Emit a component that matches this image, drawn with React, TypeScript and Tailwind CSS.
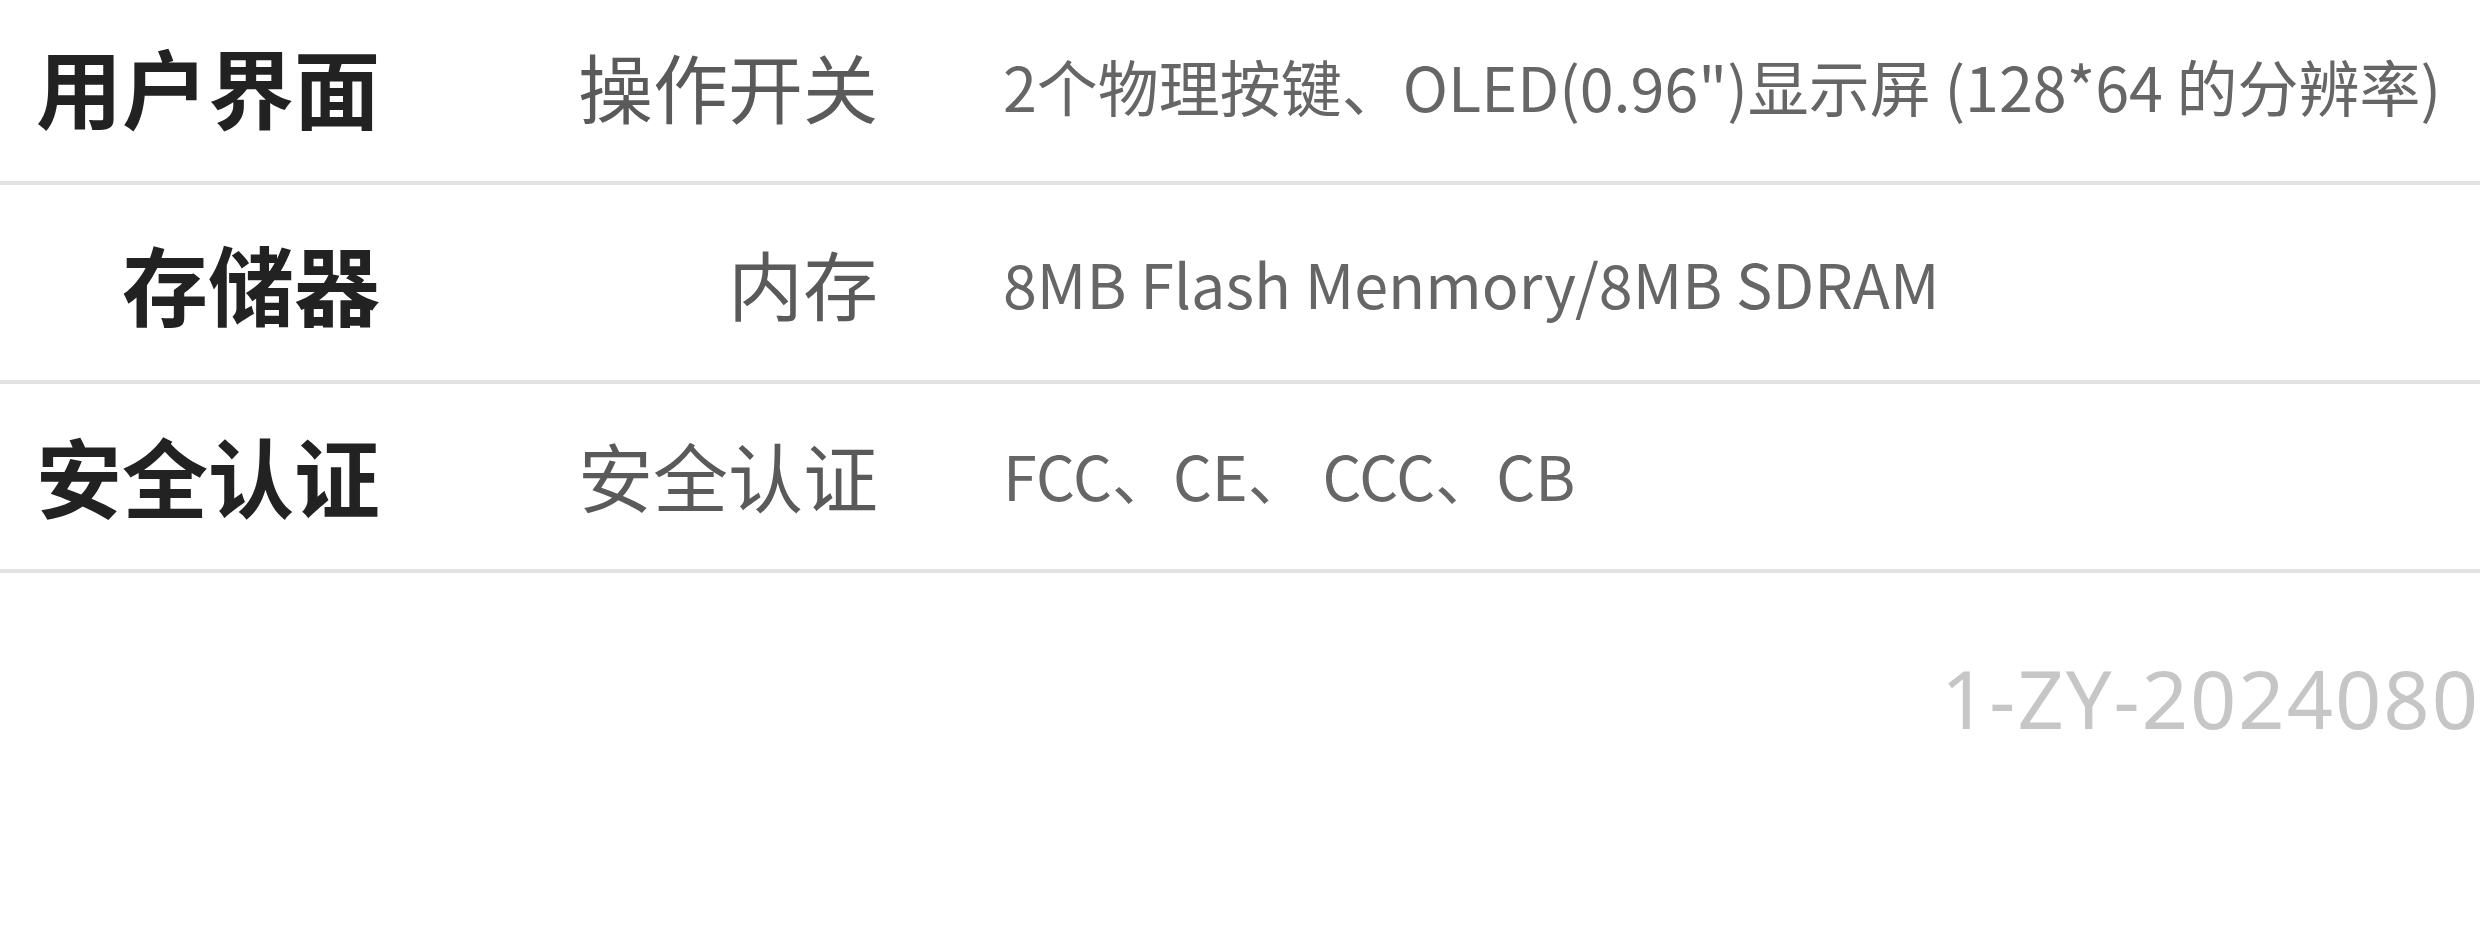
import React from "react";

const rows = [
  {
    a: "用户界面",
    b: "操作开关",
    c: "2个物理按键、OLED(0.96\")显示屏 (128*64 的分辨率)",
    h: "h-[185px] pb-[10px]",
  },
  {
    a: "存储器",
    b: "内存",
    c: "8MB Flash Menmory/8MB SDRAM",
    h: "h-[199px]",
  },
  {
    a: "安全认证",
    b: "安全认证",
    c: "FCC、CE、 CCC、CB",
    h: "h-[189px] pb-[4px]",
  },
];

export default function App() {
  return (
    <div className="w-[2480px] h-[932px] bg-white overflow-hidden">
      <div className="flex flex-col font-['Noto_Sans_CJK_SC','Noto_Sans',sans-serif]">
        {rows.map((r, i) => (
          <div
            key={i}
            className={`flex items-center ${r.h} border-b-4 border-[#e2e2e2]`}
          >
            <div className="w-[380px] shrink-0 text-right text-[86px] leading-none font-bold text-[#222222]">
              {r.a}
            </div>
            <div className="w-[498px] shrink-0 text-right text-[75px] leading-none text-[#5a5a5a]">
              {r.b}
            </div>
            <div className="pl-[125px] whitespace-nowrap text-[61px] leading-none text-[#666666]">
              {r.c}
            </div>
          </div>
        ))}
      </div>
      <div className="flex justify-end pt-[84px]">
        <div className="whitespace-nowrap text-[81px] leading-none tracking-[2px] text-[#c6c6c6] font-['Noto_Sans',sans-serif]">
          1-ZY-2024080
        </div>
      </div>
    </div>
  );
}
